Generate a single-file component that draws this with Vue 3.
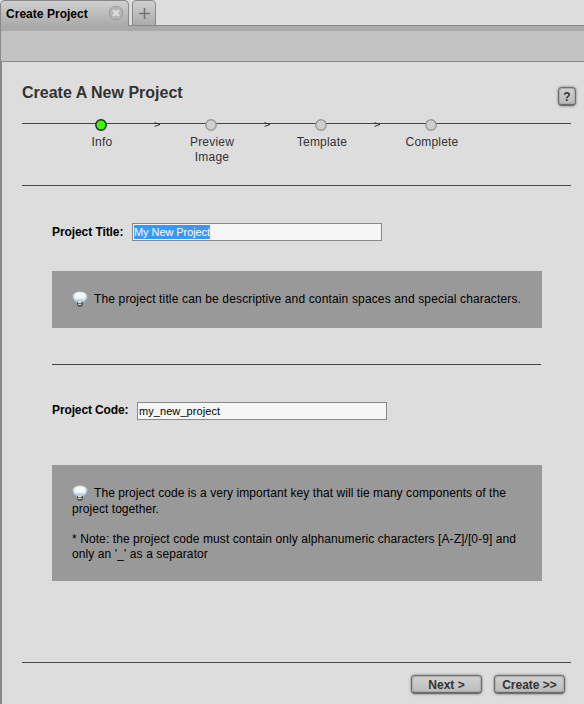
<script setup>
import { ref } from 'vue'

const title = ref('My New Project')
const code = ref('my_new_project')
const steps = [
  { label: ['Info'], active: true },
  { label: ['Preview', 'Image'] },
  { label: ['Template'] },
  { label: ['Complete'] },
]
</script>

<template>
  <div class="window">
    <header class="tabs">
      <div class="tab">
        <span class="tab-name">Create Project</span>
        <svg class="close" width="14" height="14" viewBox="0 0 14 14">
          <path d="M4 .5h6L13.500 4v6L10 13.500H4L.5 10V4z" fill="#b4b4b4" stroke="#9e9e9e" />
          <path d="M4 4l6 6M10 4l-6 6" stroke="#e0e0e0" stroke-width="2.200" />
        </svg>
      </div>
      <div class="add">
        <svg width="11" height="11" viewBox="0 0 11 11"><path d="M5.500 0v11M0 5.500h11" stroke="#737373" stroke-width="1.600" /></svg>
      </div>
      <div class="rest"></div>
    </header>
    <div class="strip"></div>
    <div class="toolbar"></div>

    <main class="panel">
      <div class="heading">
        <h1>Create A New Project</h1>
        <button class="btn help"><span>?</span></button>
      </div>

      <nav class="steps">
        <template v-for="(step, i) in steps" :key="i">
          <div class="step">
            <svg class="dot" width="12" height="12" viewBox="0 0 12 12">
              <circle cx="6" cy="6" r="5.200" :fill="step.active ? '#3cf60d' : '#cfcfcf'" :stroke="step.active ? '#172b12' : '#999'" stroke-width="1.400" />
            </svg>
            <div v-for="part in step.label" :key="part" class="step-label">{{ part }}</div>
          </div>
          <svg v-if="i < 3" class="arrow" width="7" height="5" viewBox="0 0 7 5"><path d="M.5 .6L6 2.500L.5 4.400" fill="none" stroke="#333" /></svg>
        </template>
      </nav>

      <section class="form">
        <div class="field first">
          <label class="l1">Project Title:</label>
          <div class="input"><span class="selected">{{ title }}</span></div>
        </div>
        <div class="note short">
          <p><svg class="bulb" width="16" height="16" viewBox="0 0 16 16"><use href="#bulb-shape" /></svg><span class="t1">The project title can be descriptive and contain spaces and special characters.</span></p>
        </div>
        <div class="field second">
          <label class="l2">Project Code:</label>
          <div class="input"><span class="value">{{ code }}</span></div>
        </div>
        <div class="note long">
          <p><svg class="bulb" width="16" height="16" viewBox="0 0 16 16">
            <defs>
              <radialGradient id="glass" cx=".5" cy=".35" r=".65">
                <stop offset="0" stop-color="#fff" />
                <stop offset=".6" stop-color="#eaf1f3" />
                <stop offset="1" stop-color="#93bdd1" />
              </radialGradient>
              <g id="bulb-shape">
                <path d="M1 5.500C1 2.500 4 .8 8 .8s7 1.700 7 4.700c0 2.700-1.600 4-3 5L11 11.600H5l-.9-1.100C2.600 9.500 1 8.200 1 5.500z" fill="url(#glass)" stroke="#a5c6d5" stroke-width=".7" />
                <path d="M6 11V8l1 .8 1-.8 1 .8 1-.8v3" fill="none" stroke="#a5c0ca" stroke-width=".7" />
                <path d="M5 11h6v3l-1.300 1.700H6.300L5 14z" fill="#555550" />
                <path d="M6 11.500h3.500M6 13.300h3.500" stroke="#e6e6e0" stroke-width="1" />
              </g>
            </defs>
            <use href="#bulb-shape" />
          </svg><span class="t2">The project code is a very important key that will tie many components of the</span></p>
          <p class="t3">project together.</p>
          <p class="t4">* Note: the project code must contain only alphanumeric characters [A-Z]/[0-9] and</p>
          <p class="t5">only an '_' as a separator</p>
        </div>
      </section>

      <footer class="actions">
        <button class="btn next"><span>Next &gt;</span></button>
        <button class="btn create"><span>Create &gt;&gt;</span></button>
      </footer>
    </main>
  </div>
</template>

<style>
body { margin: 0; overflow: hidden; }
</style>

<style scoped>
* { box-sizing: border-box; }
.window {
  width: 584px;
  height: 704px;
  background: #ddd;
  color: #000;
  font: 12px/15px "Liberation Sans", Arial, sans-serif;
}
.tabs { display: flex; height: 26px; }
.tab {
  display: flex;
  align-items: center;
  width: 129px;
  padding: 1px 5px 0;
  border: 1px solid #888;
  border-bottom: 0;
  border-radius: 5px 5px 0 0;
  background: linear-gradient(#d0d0d0, #aaa);
  font-weight: bold;
}
.tab-name { flex: 1; white-space: nowrap; letter-spacing: .03px; }
.close { flex: none; margin: -2px 0 0; }
.add {
  display: flex;
  align-items: center;
  justify-content: center;
  width: 27px;
  border: solid #888;
  border-width: 0 0 1px;
  padding-left: 3px;
  position: relative;
}
.add::before {
  content: "";
  position: absolute;
  inset: 0 0 -1px 3px;
  border: 1px solid #888;
  border-radius: 4px 4px 0 0;
  background: linear-gradient(#d0d0d0, #ababab);
}
.add svg { position: relative; margin-top: 2px; }
.rest { flex: 1; border-bottom: 1px solid #888; }
.strip { height: 5px; background: #a9a9a9; border-left: 1px solid #888; }
.toolbar { height: 31px; background: #c3c3c3; border: solid #888; border-width: 0 0 1px 1px; }
.panel { height: 642px; border-left: 2px solid #888; padding: 0 13px 0 20px; }
.heading { display: flex; justify-content: space-between; height: 57px; margin-right: -5px; }
h1 { margin: 21px 0 0; font-size: 16px; line-height: 20px; color: #333; }
.btn {
  display: flex;
  align-items: center;
  justify-content: center;
  padding: 1px 0 0;
  border: 1px solid #707070;
  border-bottom: 2px solid #6c6c6c;
  border-radius: 4px;
  background: linear-gradient(#d2d2d2, #bcbcbc);
  box-shadow: 0 0 2px 1px #aaa, inset 0 0 1px 1px #aaa;
  color: #333;
  font: bold 12px/14px "Liberation Sans", Arial, sans-serif;
  white-space: nowrap;
}
.help { width: 18px; height: 19px; margin: 25px 0 0; }
.steps {
  display: flex;
  height: 67px;
  padding-left: 28px;
  background: linear-gradient(#444, #444) 0 4px / 100% 1px no-repeat;
  border-bottom: 1px solid #444;
  color: #333;
}
.step { width: 104px; flex: none; margin-right: 6px; text-align: center; }
.dot { display: block; margin: 0 0 4px 45px; }
.step-label { line-height: 15px; letter-spacing: .2px; }
.arrow { flex: none; margin: 4px 0 0 -7px; position: relative; top: -1px; left: 1px; }
.form { padding: 0 30px; }
.field { display: flex; font-weight: bold; }
.first { height: 85px; padding-top: 37px; }
.second { width: 489px; height: 101px; margin-top: 36px; padding-top: 37px; border-top: 1px solid #444; }
label { line-height: 18px; flex: none; white-space: nowrap; letter-spacing: -.08px; }
.l1 { width: 80px; }
.l2 { width: 85px; line-height: 17px; letter-spacing: -.12px; }
.input {
  display: flex;
  align-items: center;
  width: 250px;
  height: 18px;
  padding: 0 1px;
  border: 1px solid #888;
  background: #f6f6f6;
  font: 11px/14px "Liberation Sans", Arial, sans-serif;
}
.selected { background: #39f; color: #fff; letter-spacing: -.07px; }
.value { padding-left: 0; letter-spacing: .07px; }
.note { width: 490px; background: #999; padding: 20px; white-space: nowrap; }
.note p { margin: 0; line-height: 15px; }
.note p:first-child { display: flex; align-items: center; height: 16px; }
.bulb { flex: none; margin-right: 6px; }
.short { height: 57px; }
.long { height: 116px; }
.t1 { letter-spacing: .145px; }
.t2 { letter-spacing: .066px; }
.t3 { letter-spacing: .05px; padding-top: 1px; }
.note .t4 { margin-top: 15px; letter-spacing: .088px; }
.t5 { letter-spacing: .1px; }
.actions { display: flex; gap: 12px; justify-content: flex-end; margin-top: 81px; padding: 12px 6px 0 0; border-top: 1px solid #444; }
.actions .btn { height: 19px; margin: 0; width: 71px; }
</style>
